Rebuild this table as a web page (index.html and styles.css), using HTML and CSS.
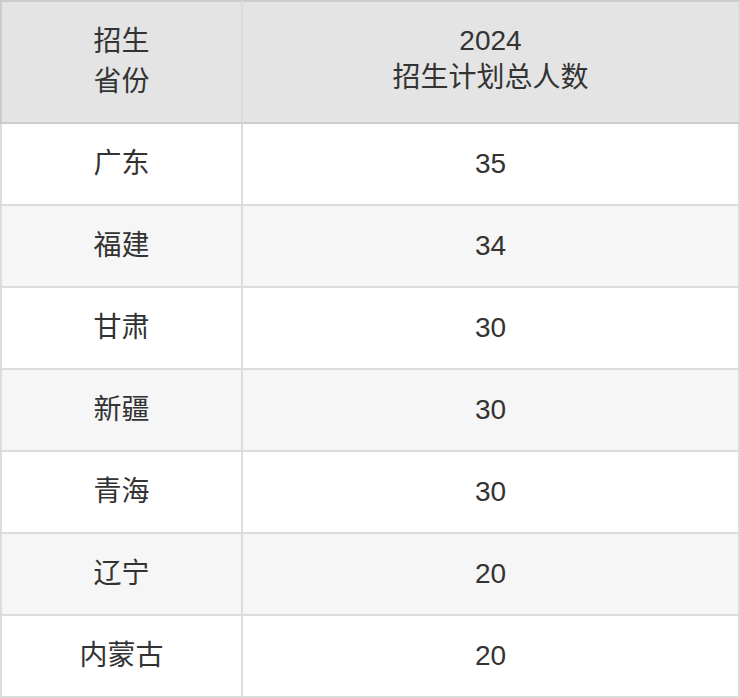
FILE: index.html
```html
<!DOCTYPE html>
<html lang="zh-CN">
<head>
<meta charset="utf-8">
<title>招生计划</title>
<link rel="stylesheet" href="styles.css">
</head>
<body>
<table class="plan">
  <thead>
    <tr>
      <th class="c-prov"><div class="h1">招生<br>省份</div></th>
      <th class="c-num"><div class="h2">2024<br>招生计划总人数</div></th>
    </tr>
  </thead>
  <tbody>
    <tr><td class="c-prov">广东</td><td class="c-num">35</td></tr>
    <tr><td class="c-prov">福建</td><td class="c-num">34</td></tr>
    <tr><td class="c-prov">甘肃</td><td class="c-num">30</td></tr>
    <tr><td class="c-prov">新疆</td><td class="c-num">30</td></tr>
    <tr><td class="c-prov">青海</td><td class="c-num">30</td></tr>
    <tr><td class="c-prov">辽宁</td><td class="c-num">20</td></tr>
    <tr><td class="c-prov">内蒙古</td><td class="c-num">20</td></tr>
  </tbody>
</table>
</body>
</html>
```

FILE: styles.css
```css
html, body {
  margin: 0;
  padding: 0;
  background: #ffffff;
}

body {
  font-family: "Liberation Sans", "Noto Sans CJK SC", sans-serif;
  color: #333333;
  font-size: 28px;
}

.plan {
  border-collapse: separate;
  border-spacing: 0;
  table-layout: fixed;
  width: 740px;
}

.plan th,
.plan td {
  box-sizing: border-box;
  padding: 0;
  text-align: center;
  vertical-align: middle;
  font-weight: normal;
}

.plan .c-prov {
  width: 243px;
  border-left: 2px solid #dcdcdc;
  border-right: 2px solid #dcdcdc;
}

.plan .c-num {
  width: 497px;
  border-right: 2px solid #dcdcdc;
}

.plan td {
  height: 82px;
  line-height: 32px;
  border-bottom: 2px solid #dcdcdc;
}

.plan tbody tr:nth-child(even) td {
  background: #f6f6f6;
}

.plan th {
  height: 124px;
  background: #e4e4e4;
  border-top: 2px solid #cccccc;
  border-bottom: 2px solid #cccccc;
  border-right-color: #cccccc;
}

.plan th.c-prov {
  border-left-color: #cccccc;
}

.h1 {
  line-height: 40px;
}

.h2 {
  line-height: 37px;
  padding-bottom: 6px;
}
```
